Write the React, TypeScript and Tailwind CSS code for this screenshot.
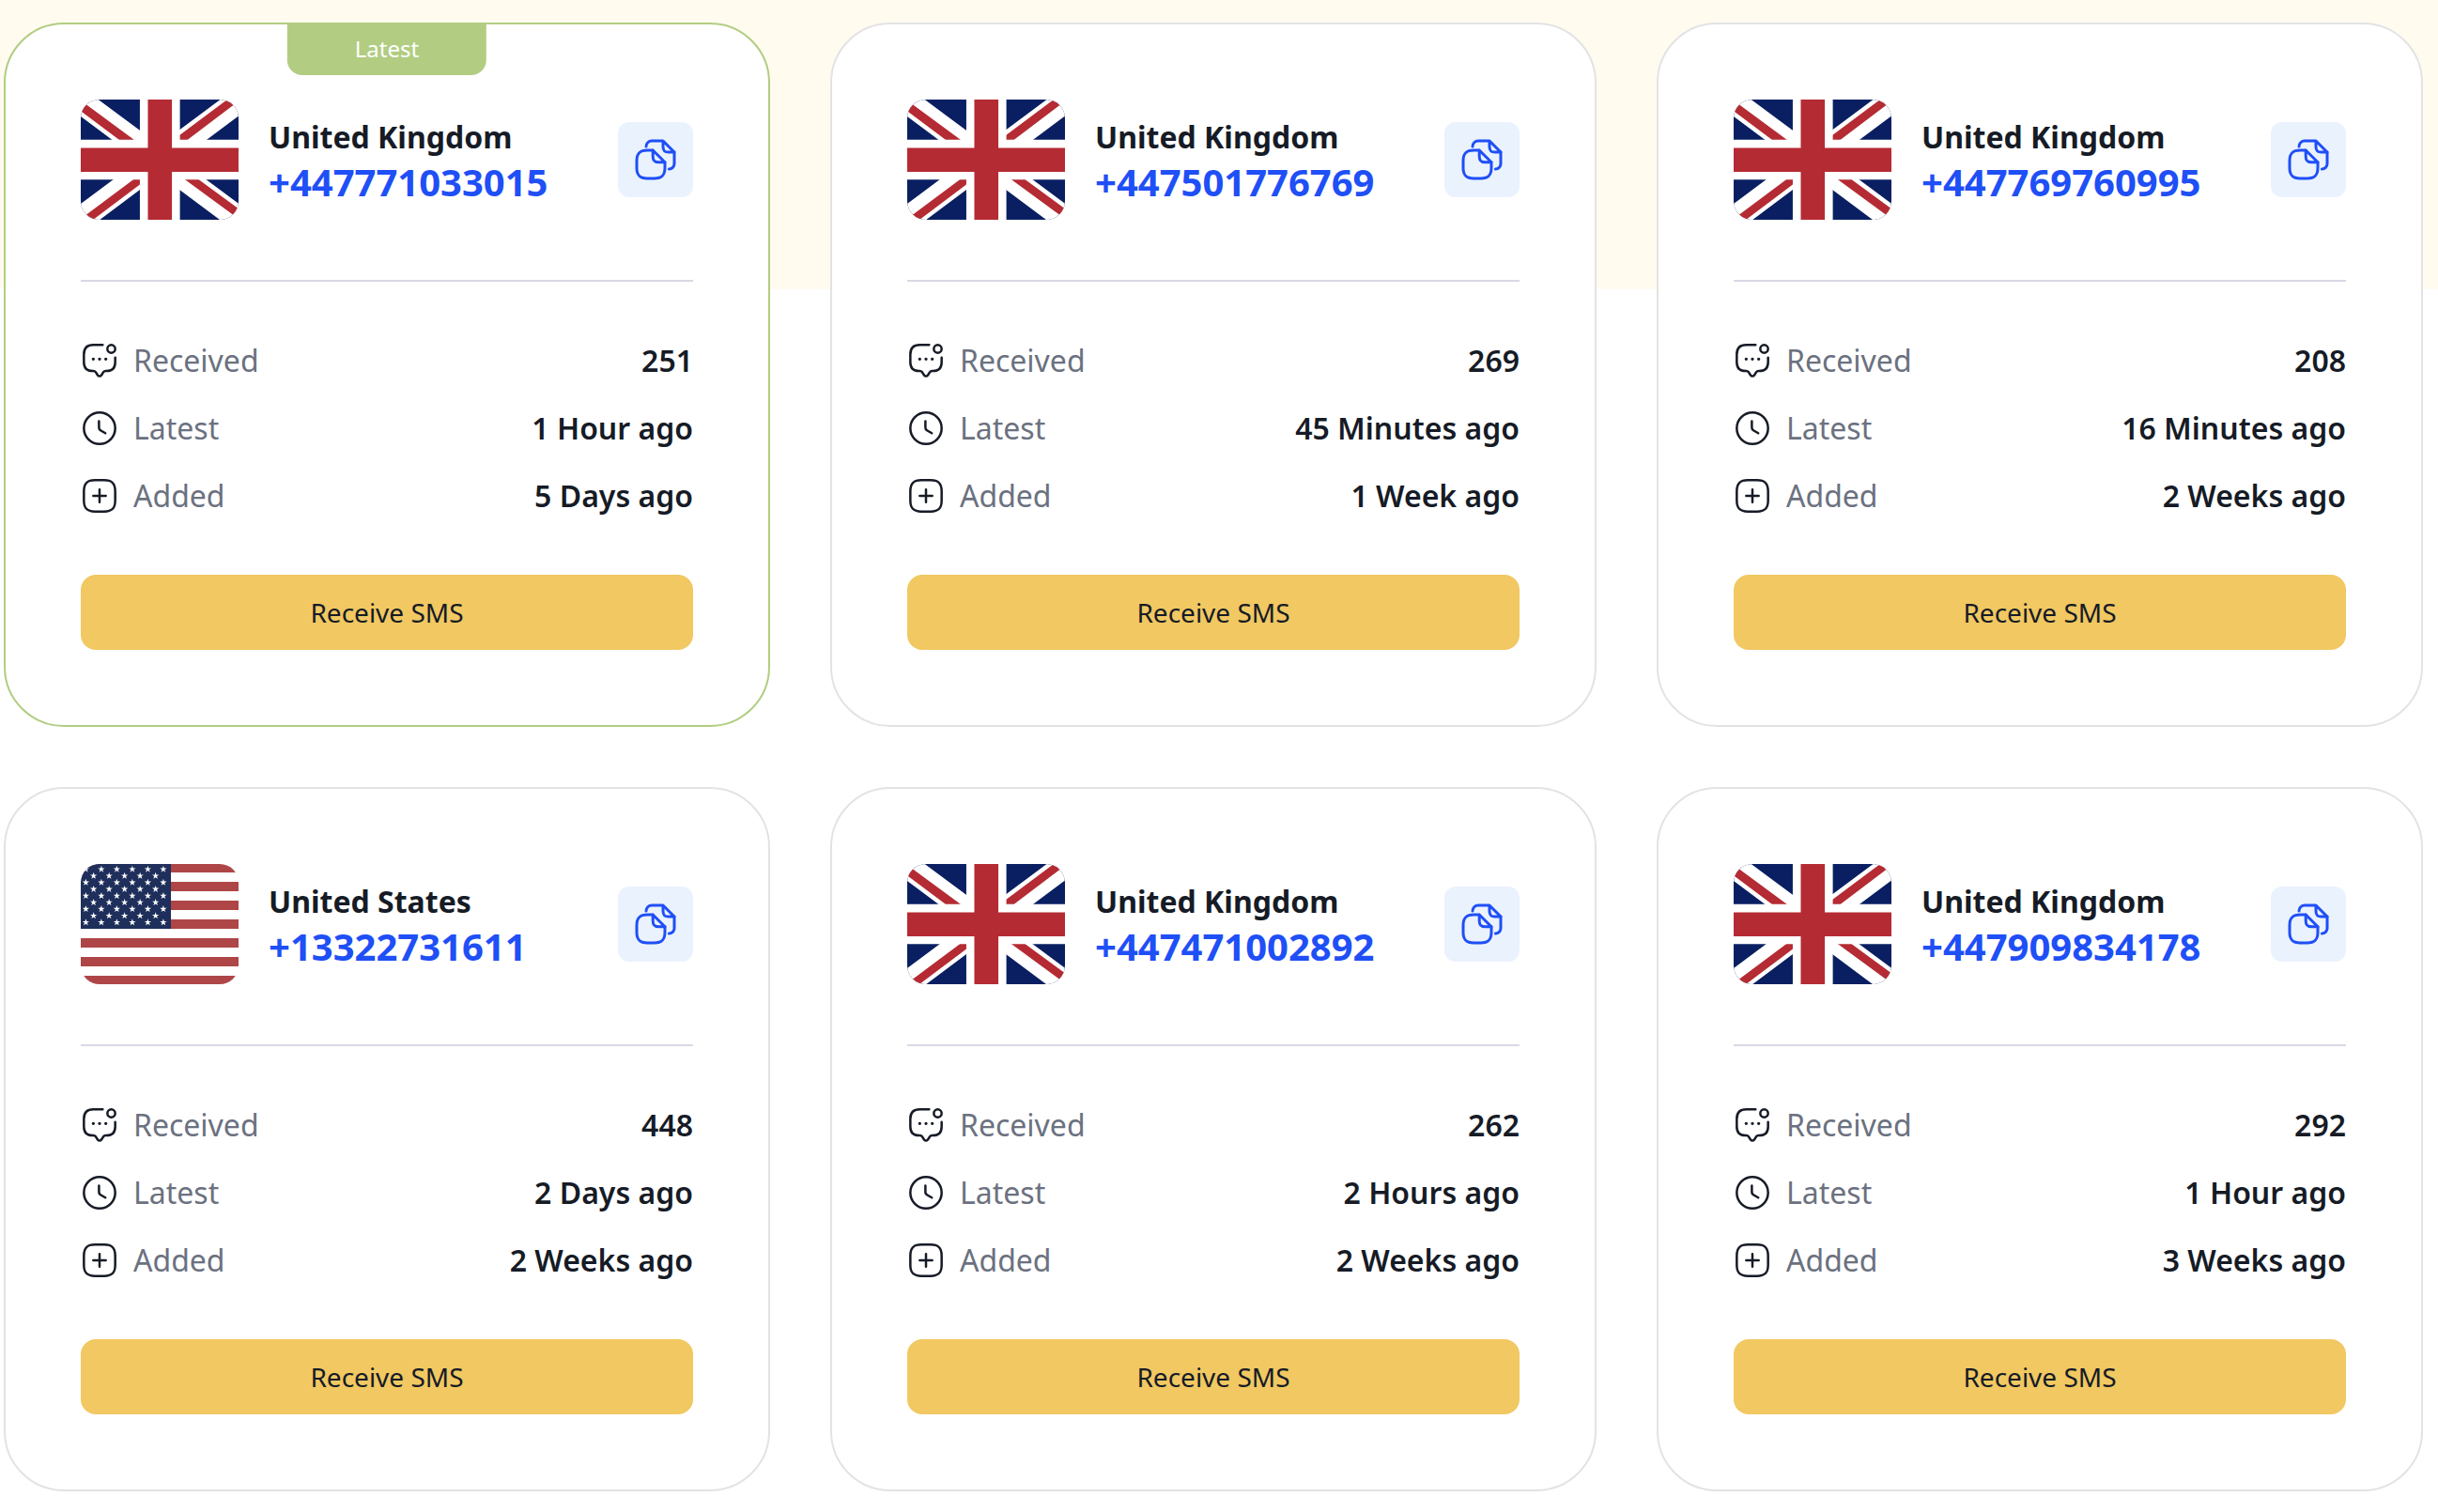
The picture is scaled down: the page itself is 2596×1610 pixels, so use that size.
import type { ReactNode } from "react";
import clsx from "clsx";

type Country = "gb" | "us";

interface PhoneNumber {
	country: Country;
	number: string;
	received: number;
	latest: string;
	added: string;
	isLatest?: boolean;
}

const countryNames: Record<Country, string> = {
	gb: "United Kingdom",
	us: "United States",
};

const numbers: PhoneNumber[] = [
	{ country: "gb", number: "+447771033015", received: 251, latest: "1 Hour ago", added: "5 Days ago", isLatest: true },
	{ country: "gb", number: "+447501776769", received: 269, latest: "45 Minutes ago", added: "1 Week ago" },
	{ country: "gb", number: "+447769760995", received: 208, latest: "16 Minutes ago", added: "2 Weeks ago" },
	{ country: "us", number: "+13322731611", received: 448, latest: "2 Days ago", added: "2 Weeks ago" },
	{ country: "gb", number: "+447471002892", received: 262, latest: "2 Hours ago", added: "2 Weeks ago" },
	{ country: "gb", number: "+447909834178", received: 292, latest: "1 Hour ago", added: "3 Weeks ago" },
];

const flagClass = "h-32 w-42 shrink-0 rounded-[20px]";

function FlagGB() {
	return (
		<svg className={flagClass} viewBox="0 0 640 480" preserveAspectRatio="xMidYMid slice" aria-hidden="true">
			<path fill="#0a1f62" d="M0 0h640v480H0z" />
			<path
				fill="#fff"
				d="m75 0 244 181L562 0h78v62L400 241l240 178v61h-80L320 301 81 480H0v-60l239-178L0 64V0z"
			/>
			<path
				fill="#b52b33"
				d="m424 281 216 159v40L369 281zm-184 20 6 35L54 480H0zM640 0v3L391 191l2-44L590 0zM0 0l239 176h-60L0 42z"
			/>
			<path fill="#fff" d="M241 0v480h160V0zM0 160v160h640V160z" />
			<path fill="#b52b33" d="M0 193v96h640v-96zM273 0v480h96V0z" />
		</svg>
	);
}

// 9 rows of stars, alternating 6 and 5 per row
const stars = Array.from({ length: 9 }, (_, row) =>
	Array.from({ length: row % 2 ? 5 : 6 }, (_, i) => ({
		x: 5.4 + 8.25 * (i * 2 + (row % 2)),
		y: 5.6 + 7.07 * row,
	})),
).flat();

function FlagUS() {
	return (
		<svg className={flagClass} viewBox="0 0 168 128" aria-hidden="true">
			<path fill="#fff" d="M0 0h168v128H0z" />
			{[0, 1, 2, 3, 4, 5, 6].map((i) => (
				<rect key={i} y={i * 20 - 1} width="168" height="10" fill="#ae4648" />
			))}
			<path fill="#1f2f5b" d="M0 0h96v69H0z" />
			{stars.map(({ x, y }) => (
				<path
					key={`${x}-${y}`}
					transform={`translate(${x} ${y})`}
					fill="#fff"
					d="M0-3.9.9-1.2H3.7L1.4.4 2.3 3.1 0 1.5-2.3 3.1-1.4.4-3.7-1.2H-.9z"
				/>
			))}
		</svg>
	);
}

function Icon({ className, children }: { className: string; children: ReactNode }) {
	return (
		<svg
			className={className}
			viewBox="0 0 24 24"
			fill="none"
			stroke="currentColor"
			strokeWidth="1.5"
			strokeLinecap="round"
			strokeLinejoin="round"
			aria-hidden="true"
		>
			{children}
		</svg>
	);
}

function CopyIcon() {
	return (
		<Icon className="size-12">
			<path d="M17 13.4v3c0 4-1.6 5.6-5.6 5.6H7.6C3.6 22 2 20.4 2 16.4v-3.8C2 8.6 3.6 7 7.6 7h3" />
			<path d="M17 13.4h-3.2c-2.4 0-3.2-.8-3.2-3.2V7z" />
			<path d="M11.6 2h4M7 5c0-1.66 1.34-3 3-3h2.62M22 8v6.19c0 1.55-1.26 2.81-2.81 2.81" />
			<path d="M22 8h-3c-2.25 0-3-.75-3-3V2z" />
		</Icon>
	);
}

function MessageIcon() {
	return (
		<Icon className="size-10 text-[#161b26]">
			<path d="M22 10v3c0 3.8-2 5.6-5.6 5.6h-.5c-.6 0-1.1.3-1.5.8l-1.2 1.9c-.66.88-1.74.88-2.4 0l-1.2-1.9c-.4-.5-.9-.8-1.5-.8h-.5C4 18.6 2 17 2 13V8c0-4 2-6 6-6h6" />
			<circle cx="19.5" cy="4.5" r="2.5" />
			<path strokeWidth="2" d="M16 11h.01M12 11h.01M8 11h.01" />
		</Icon>
	);
}

function ClockIcon() {
	return (
		<Icon className="size-10 text-[#161b26]">
			<circle cx="12" cy="12" r="10" />
			<path d="m15.71 15.18-3.1-1.85c-.54-.32-.98-1.09-.98-1.72v-4.1" />
		</Icon>
	);
}

function AddIcon() {
	return (
		<Icon className="size-10 text-[#161b26]">
			<path d="M8 12h8M12 16V8M9 22h6c5 0 7-2 7-7V9c0-5-2-7-7-7H9C4 2 2 4 2 9v6c0 5 2 7 7 7z" />
		</Icon>
	);
}

function Stat({ icon, label, value }: { icon: ReactNode; label: string; value: string | number }) {
	return (
		<div className="flex items-center justify-between text-[32px] leading-10">
			<dt className="flex items-center gap-4 text-[#6b7180]">
				{icon}
				{label}
			</dt>
			<dd className="font-semibold">{value}</dd>
		</div>
	);
}

function NumberCard({ country, number, received, latest, added, isLatest }: PhoneNumber) {
	return (
		<article
			className={clsx(
				"relative flex flex-col gap-16 rounded-[64px] border-2 bg-white p-20",
				isLatest ? "border-[#b2cd82]" : "border-[#e3e3e5]",
			)}
		>
			{isLatest && (
				<span className="absolute -top-0.5 left-1/2 -translate-x-1/2 rounded-b-2xl bg-[#b2cd82] px-18 py-2 text-2xl leading-10 text-white">
					Latest
				</span>
			)}

			<div className="flex items-center gap-8">
				{country === "gb" ? <FlagGB /> : <FlagUS />}
				<div className="grow">
					<h2 className="text-[32px] leading-12 font-bold">{countryNames[country]}</h2>
					<p className="text-[40px] leading-12 font-bold text-[#1f4ff6]">{number}</p>
				</div>
				<button
					type="button"
					aria-label={`Copy ${number}`}
					className="flex size-20 shrink-0 items-center justify-center rounded-xl bg-[#eaf2fe] text-[#1f4ff6]"
				>
					<CopyIcon />
				</button>
			</div>

			<dl className="flex flex-col gap-8 border-t-2 border-[#d8d9e3] pt-16">
				<Stat icon={<MessageIcon />} label="Received" value={received} />
				<Stat icon={<ClockIcon />} label="Latest" value={latest} />
				<Stat icon={<AddIcon />} label="Added" value={added} />
			</dl>

			<a href="#" className="rounded-2xl bg-[#f1c861] py-5 text-center text-[28px] leading-10">
				Receive SMS
			</a>
		</article>
	);
}

export default function App() {
	return (
		<main className="min-h-screen bg-linear-to-b from-[#fffbef] from-[308px] to-white to-[308px] pt-6 pr-4 pl-1 font-['Noto_Sans',sans-serif] text-[#161b26]">
			<div className="grid grid-cols-3 gap-16">
				{numbers.map((item) => (
					<NumberCard key={item.number} {...item} />
				))}
			</div>
		</main>
	);
}
